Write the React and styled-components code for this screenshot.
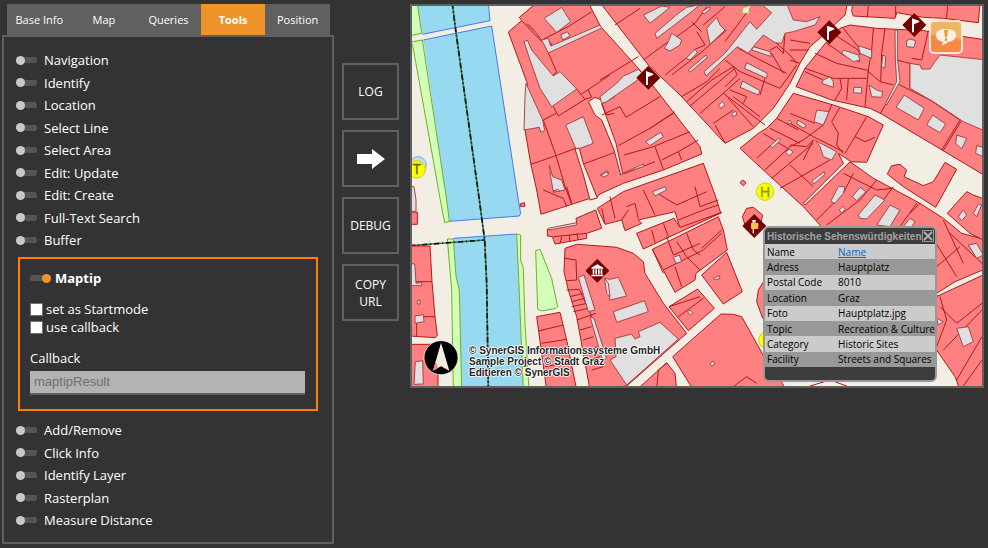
import { useState } from 'react';
import styled, { createGlobalStyle, ThemeProvider } from 'styled-components';

const theme = {
  colors: {
    bg: '#333333',
    line: '#606060',
    text: '#ffffff',
    accent: '#ee922a',
    highlight: '#ff8000',
    track: '#555555',
    knob: '#c9c9c9',
    field: '#b3b3b3',
  },
  fonts: {
    ui: '"Open Sans", "Noto Sans", sans-serif',
    plain: '"Liberation Sans", Arial, sans-serif',
  },
};

const GlobalStyle = createGlobalStyle`
  * {
    box-sizing: border-box;
  }

  body {
    margin: 0;
    background: ${theme.colors.bg};
    color: ${theme.colors.text};
    font-family: ${theme.fonts.ui};
    font-size: 13px;
  }
`;

const Page = styled.main`
  display: flex;
  align-items: flex-start;
  padding: 4px 4px 4px 2px;
`;

const Sidebar = styled.section`
  flex: 0 0 332px;
`;

const Tabs = styled.nav`
  display: flex;
  margin: 0 4px 0 5px;
  background: ${(props) => props.theme.colors.line};
`;

const Tab = styled.button`
  flex: 1 1 0;
  height: 31px;
  padding: 0;
  border: 0;
  background: ${(props) => (props.$active ? props.theme.colors.accent : 'transparent')};
  color: ${(props) => props.theme.colors.text};
  font-family: inherit;
  font-size: 11px;
  font-weight: ${(props) => (props.$active ? 700 : 400)};
  cursor: pointer;
`;

const Panel = styled.div`
  padding: 12px 14px 11px 12px;
  border: 2px solid ${(props) => props.theme.colors.line};
`;

const ToolList = styled.ul`
  display: flex;
  flex-direction: column;
  justify-content: space-between;
  height: ${(props) => props.$height}px;
  margin: 0;
  padding: 0;
  list-style: none;
`;

const ToolLabel = styled.label`
  display: flex;
  align-items: center;
  gap: ${(props) => (props.$strong ? 4 : 7)}px;
  height: 22px;
  font-weight: ${(props) => (props.$strong ? 700 : 400)};
  cursor: pointer;
`;

const Toggle = styled.input`
  appearance: none;
  display: flex;
  align-items: center;
  justify-content: flex-start;
  width: 21px;
  height: 9px;
  margin: 0;
  border-radius: 5px;
  background: linear-gradient(${(props) => props.theme.colors.track} 0 0) center / 100% 6px no-repeat;
  cursor: pointer;

  &::before {
    content: '';
    width: 9px;
    height: 9px;
    border-radius: 50%;
    background: ${(props) => props.theme.colors.knob};
  }

  &:checked {
    justify-content: flex-end;
  }

  &:checked::before {
    background: ${(props) => props.theme.colors.accent};
  }
`;

const ToolCard = styled.div`
  margin: 6px 0 8px 2px;
  padding: 8px 11px 14px 10px;
  border: 2px solid ${(props) => props.theme.colors.highlight};
`;

const Options = styled.div`
  margin: 11px 0 12px;
`;

const CheckLabel = styled.label`
  display: flex;
  align-items: center;
  gap: 3px;
  height: 18px;
`;

const Checkbox = styled.input`
  appearance: none;
  width: 13px;
  height: 13px;
  margin: 0;
  border: 1px solid #707070;
  background: #ffffff;

  &:checked {
    box-shadow: inset 0 0 0 2px #ffffff;
    background: ${(props) => props.theme.colors.accent};
  }
`;

const FieldLabel = styled.label`
  display: block;
  height: 23px;
  line-height: 20px;
`;

const TextField = styled.input`
  display: block;
  width: 100%;
  height: 24px;
  padding: 0 4px 2px;
  border: 0;
  border-bottom: 2px solid ${(props) => props.theme.colors.line};
  background: ${(props) => props.theme.colors.field};
  color: #6f6f6f;
  font-family: ${(props) => props.theme.fonts.plain};
  font-size: 13px;
`;

const Actions = styled.div`
  display: flex;
  flex: 0 0 57px;
  flex-direction: column;
  gap: 10px;
  margin: 59px 11px 0 8px;
`;

const ActionButton = styled.button`
  display: flex;
  align-items: center;
  justify-content: center;
  height: 57px;
  padding: 0;
  border: 2px solid ${(props) => props.theme.colors.line};
  background: transparent;
  color: ${(props) => props.theme.colors.text};
  font-family: inherit;
  font-size: 12px;
  line-height: 17px;
  cursor: pointer;
`;

const MapFrame = styled.section`
  position: relative;
  flex: 1 1 0;
  min-width: 0;
  border: 2px solid ${(props) => props.theme.colors.line};
`;

const MapCanvas = styled.svg`
  display: block;
  width: 100%;
  height: auto;
  background: #f2eee3;
`;

const AlertButton = styled.button`
  position: absolute;
  top: 14px;
  right: 19px;
  display: flex;
  align-items: center;
  justify-content: center;
  width: 34px;
  height: 34px;
  padding: 0;
  border: 2px solid #fde6d2;
  border-radius: 5px;
  background: linear-gradient(190deg, #f0b469 0 45%, #f58a45 55% 100%);
  cursor: pointer;
`;

const Copyright = styled.p`
  position: absolute;
  bottom: 8px;
  left: 57px;
  margin: 0;
  color: #222222;
  font-family: ${(props) => props.theme.fonts.plain};
  font-size: 10px;
  font-weight: 700;
  line-height: 11px;
  text-shadow: 1px 0 #ffffff, -1px 0 #ffffff, 0 1px #ffffff, 0 -1px #ffffff;
`;

const Popup = styled.div`
  position: absolute;
  right: 45px;
  bottom: 4px;
  width: 174px;
  overflow: hidden;
  border: 2px solid #989898;
  border-radius: 6px;
  background: #3c3c3c;
  color: #000000;
`;

const PopupHeader = styled.header`
  display: flex;
  align-items: center;
  justify-content: space-between;
  height: 16px;
  padding: 0 2px 0 2px;
`;

const PopupTitle = styled.h2`
  margin: 0;
  color: #a3a3a3;
  font-family: ${(props) => props.theme.fonts.plain};
  font-size: 10px;
  white-space: nowrap;
`;

const CloseButton = styled.button`
  width: 12px;
  height: 12px;
  padding: 0;
  border: 1px solid #989898;
  background: transparent;
  line-height: 0;
  cursor: pointer;
`;

const PopupTable = styled.table`
  width: 100%;
  height: 123px;
  margin-bottom: 13px;
  border-collapse: collapse;
  font-size: 10px;
  line-height: 12px;
`;

const PopupRow = styled.tr`
  background: #989898;

  &:nth-child(odd) {
    background: #cbcbcb;
  }
`;

const PopupKey = styled.th`
  width: 75px;
  padding: 0 0 0 2px;
  font-weight: 400;
  text-align: left;
`;

const PopupValue = styled.td`
  padding: 0;
  white-space: nowrap;
`;

const PopupLink = styled.a`
  color: #0066cc;
`;

const tabs = ['Base Info', 'Map', 'Queries', 'Tools', 'Position'];

const toolsBefore = [
  'Navigation',
  'Identify',
  'Location',
  'Select Line',
  'Select Area',
  'Edit: Update',
  'Edit: Create',
  'Full-Text Search',
  'Buffer',
];

const toolsAfter = ['Add/Remove', 'Click Info', 'Identify Layer', 'Rasterplan', 'Measure Distance'];

const details = [
  ['Adress', 'Hauptplatz'],
  ['Postal Code', '8010'],
  ['Location', 'Graz'],
  ['Foto', 'Hauptplatz.jpg'],
  ['Topic', 'Recreation & Culture'],
  ['Category', 'Historic Sites'],
  ['Facility', 'Streets and Squares'],
];

// Map geometry, three units per screen pixel.
const water = [
  '22,10 234,10 240,62 37,103',
  '40,120 245,78 325,600 332,640 328,648 118,664 105,570',
  '130,715 320,702 335,805 347,1170 155,1170',
];

const waterEdges = ['235,10 240,62 37,103', '40,120 245,78 325,600 332,640 328,648 118,664', '130,715 320,702'];

const parks = [
  '0,10 22,10 35,100 0,107',
  '0,127 37,120 110,600 118,664 104,668 90,595 50,370 8,135',
  '112,717 130,717 138,830 148,870 155,1170 130,1170 125,870',
  '320,702 332,705 332,780 340,805 345,970 357,1170 340,1170 325,810',
  '377,752 390,748 425,835 443,920 438,925 395,933 383,928',
];

const blocks = [
  '295,96 335,62 328,52 378,10 536,10 572,80 685,205 735,265 870,440 875,462 760,510 640,550 570,582 558,593 540,595 393,643 380,570 362,490 345,390 352,250',
  '572,10 715,195 810,285 945,430 1030,385 1090,325 1140,250 1170,190 1200,140 1235,110 1305,45 1312,10',
  '990,445 1045,400 1070,385 1100,355 1150,280 1270,315 1375,350 1420,375 1370,487 1320,485 1390,535 1530,610 1600,655 1655,700 1730,720 1730,805 1635,845 1580,880 1300,880 1230,675 1180,620 1060,510',
  '1158,260 1185,205 1250,125 1290,85 1320,75 1400,85 1540,92 1730,120 1730,530 1415,342 1380,325 1265,300',
  '1328,10 1710,10 1705,68 1600,55 1540,52 1460,38 1455,55 1330,48 1325,35',
  '1432,522 1445,497 1470,493 1490,510 1482,530 1540,557 1570,545 1605,487 1640,508 1577,622 1480,560',
  '1612,640 1670,575 1690,585 1730,600 1730,725 1680,700',
  '1500,915 1590,885 1730,820 1730,1170 1650,1170 1635,1130 1580,1050 1500,1000',
  '562,625 640,575 880,490 915,585 932,638 810,685 795,635 685,660 695,670 645,692 635,660 585,673',
  '680,700 792,655 810,682 935,638 700,747',
  '727,748 925,650 940,690 952,750 858,820 855,840 795,877',
  '875,825 950,757 997,875 940,912',
  '777,920 863,867 913,925 835,992',
  '788,1070 933,942 970,943 995,950 1062,1070 1130,1170 850,1170',
  '465,745 500,733 570,738 620,742 670,760 700,785 705,820 760,910 830,1000 650,1158 540,1170 500,950 475,870 462,815',
  '680,1170 770,1088 795,1120 800,1170',
  '380,950 450,937 470,1020 500,1170 410,1170',
  '412,688 500,670 498,655 557,630 575,685 530,700 530,715 435,732 427,710 412,708',
  '0,738 60,738 66,845 75,950 82,1007 75,1013 0,1008',
  '0,1033 84,1033 84,1170 0,1170',
  '0,636 22,636 22,673 0,673',
  '330,612 343,608 345,618 332,620',
  '990,548 998,540 1008,548 1000,557',
  '997,650 1010,625 1030,622 1058,645 1050,680 1005,675',
  '1065,838 1045,870 1040,905 1058,955 1090,955',
];

const streets = [
  '495,447 508,445 520,490 562,594 540,600 520,525',
  '535,305 555,292 575,300 580,325 618,430 638,520 632,525 612,450 575,360 555,345',
  '1285,460 1322,484 1185,615 1180,610 1300,490',
];

const courtyards = [
  '402,55 455,22 482,65 440,97',
  '350,72 362,78 395,120 415,115 422,138 500,105 570,75 575,84 415,159 398,126 378,98',
  '452,105 472,95 480,108 458,120',
  '342,125 352,120 365,150 430,228 450,215 500,267 425,320 390,265 360,180',
  '348,250 398,360 404,392 392,397 388,382 342,390 345,290',
  '467,375 520,350 550,430 510,445 497,445',
  '418,495 428,530 455,540 465,570 430,577 422,530',
  '570,525 590,512 597,518 580,530',
  '570,290 600,275 615,290 577,312',
  '700,45 755,18 780,22 720,70',
  '735,100 805,40 830,22 870,14 845,35 780,85 740,115',
  '875,35 900,20 900,28 882,42',
  '890,85 920,52 930,75 945,90 900,133 895,110',
  '785,100 815,120 810,135 780,153 763,145 775,125',
  '828,175 855,148 862,158 840,180',
  '835,210 888,165 892,172 840,217',
  '882,215 945,160 1020,65 1040,88 1085,38 1050,10 1130,10 1150,60 1190,65 1230,50 1215,75 1150,95 1125,100 1115,130 1095,128 1060,105 1030,140 1015,160 982,140 888,228',
  '1010,188 1072,220 1070,235 1003,205',
  '998,243 1050,272 1045,285 990,262',
  '1030,140 1080,155 1085,170 1025,150',
  '925,315 938,305 945,315 932,325',
  '965,340 978,333 980,345 968,350',
  '570,290 620,250 640,228 685,208 695,218 690,235 590,305 575,310',
  '707,425 752,397 760,410 720,437',
  '638,520 700,492 700,500',
  '575,525 592,515 595,525 578,532',
  '727,575 765,560 770,570 735,588',
  '1500,190 1530,195 1535,207 1560,207 1575,185 1590,165 1730,180 1730,395 1660,365 1570,305 1500,265',
  '1490,122 1500,117 1517,122 1512,142 1490,140',
  '1345,137 1385,150 1385,175 1350,160',
  '1300,150 1345,165 1350,180 1330,185 1295,160',
  '1418,165 1427,170 1425,205 1415,200',
  '1455,90 1463,90 1463,180 1470,245 1430,315 1427,310 1460,245 1456,180',
  '1240,240 1260,230 1270,245 1270,262 1235,250',
  '1332,262 1355,262 1355,280 1330,278',
  '1377,255 1400,270 1418,275 1415,292 1385,290',
  '1483,285 1543,325 1525,360 1458,322',
  '1568,345 1607,372 1590,398 1550,375',
  '1640,405 1670,415 1655,447 1637,430',
  '1700,437 1730,445 1730,475 1697,460',
  '1220,330 1257,335 1240,375 1212,365',
  '1163,360 1188,375 1183,385 1160,372',
  '1217,422 1280,455 1265,480 1240,470 1230,440',
  '1205,543 1243,515 1245,523 1212,552',
  '1262,605 1285,560 1305,560 1300,580 1275,610',
  '1327,590 1350,562 1368,575 1340,602',
  '1345,645 1395,585 1425,600 1370,657 1350,655',
  '1400,675 1440,615 1470,630 1440,680',
  '1288,630 1300,618 1305,628 1295,640',
  '1128,370 1140,360 1145,370',
  '1080,438 1105,415 1112,420 1088,443',
  '1127,457 1137,447 1150,455 1138,468',
  '1645,650 1660,630 1670,645 1655,662',
  '1690,640 1705,612 1715,615 1700,650',
  '1480,680 1500,655 1515,665 1500,690',
  '1675,735 1700,730 1720,765 1700,775',
  '1640,985 1675,980 1690,1025 1660,1040',
  '1580,955 1600,965 1585,975',
  '585,835 600,838 625,832 650,888 600,900',
  '610,935 703,902 715,935 620,967',
  '615,1015 665,1002 675,1017 690,1010 685,995 750,967 805,1017 650,1155 600,1080 618,1070',
  '505,832 522,825 555,930 535,935',
  '540,950 552,955 590,1075 578,1082',
  '583,835 595,850 600,890 590,880',
  '790,772 808,765 815,785 798,790',
  '910,835 928,827 930,835 915,840',
  '900,1090 910,1083 915,1092 905,1098',
  '832,935 840,930 848,940 842,946',
  '415,685 500,668 500,675 418,690',
  '0,790 14,792 18,850 35,848 35,857 0,857',
  '15,948 40,944 42,965 15,970',
  '16,1085 38,1082 40,1152 12,1153',
  '0,560 12,560 18,600 18,634 0,634',
  '22,902 30,900 30,912 22,912',
  '430,573 445,568 450,575',
];

const parcels = [
  '415,159 440,215 430,225',
  '438,340 400,360',
  '430,320 445,348 525,298 500,267',
  '515,282 600,225',
  '525,298 545,292 535,270',
  '438,467 497,445',
  '362,493 438,467',
  '400,360 438,467 465,560 485,613',
  '520,492 585,468 612,458',
  '335,62 395,125',
  '400,118 478,78 545,35',
  '415,120 428,138',
  '575,312 590,345 612,340',
  '615,75 690,25',
  '570,240 685,170',
  '575,345 630,320 648,352 750,290',
  '625,437 720,385 795,335',
  '720,385 790,340',
  '642,465 730,440 840,395',
  '735,440 760,508',
  '755,480 805,455 865,420',
  '805,455 815,480',
  '640,522 735,485',
  '700,180 795,110',
  '785,225 870,160 950,90',
  '765,225 840,165',
  '815,290 890,245 930,205',
  '830,305 905,240 970,200',
  '840,318 975,205',
  '870,340 940,280 990,235',
  '860,95 870,110 885,135 850,150',
  '845,65 875,95',
  '945,125 1020,25',
  '880,75 945,20',
  '800,110 855,70 890,20',
  '910,370 970,330',
  '955,295 1030,380',
  '945,180 990,215 1110,265 1160,195',
  '985,145 1050,180 1130,220',
  '970,200 982,225 945,260',
  '970,290 1050,350',
  '940,280 1065,375',
  '1065,235 1050,285',
  '1000,310 1010,290 960,270',
  '915,375 945,428',
  '1070,105 1140,165 1160,190',
  '1030,140 1060,150 1085,160 1120,220',
  '1125,100 1120,160 1100,140 1080,150',
  '1060,80 1068,68 1080,80 1068,92 1060,80',
  '1140,150 1195,150',
  '1140,120 1200,130',
  '1140,180 1170,190',
  '1250,130 1280,150 1300,165 1350,185',
  '1275,105 1345,150 1350,165',
  '1300,85 1360,160',
  '1215,160 1280,190 1370,210 1410,245 1450,255',
  '1185,205 1270,235 1370,235',
  '1185,215 1240,240',
  '1390,85 1385,150 1375,210 1365,320',
  '1425,85 1415,160 1412,245',
  '1460,180 1500,190 1500,265',
  '1555,92 1535,180 1505,175',
  '1315,235 1310,300',
  '1290,235 1295,265 1275,300',
  '1460,250 1560,300 1650,360',
  '1410,342 1435,300',
  '1650,360 1595,450',
  '1654,362 1599,453',
  '1375,18 1372,52',
  '1457,10 1457,50',
  '1613,10 1610,55',
  '1265,315 1240,375 1180,420',
  '1290,322 1265,365 1285,400 1280,435 1300,460',
  '1370,350 1335,410 1305,460',
  '1335,410 1365,425 1395,412',
  '1140,340 1215,370',
  '1140,370 1210,410 1300,455',
  '1140,435 1190,440 1210,420 1180,480',
  '1080,385 1170,430',
  '1100,355 1165,390',
  '1040,475 1100,420',
  '1065,510 1140,440 1180,420',
  '1060,400 1140,450',
  '1085,535 1210,430',
  '1110,565 1260,480',
  '1140,495 1210,560',
  '1220,660 1300,580 1330,520',
  '1250,675 1350,600 1400,540',
  '1300,520 1400,570 1450,565',
  '1420,600 1450,560',
  '1500,640 1530,610',
  '1470,680 1520,610',
  '575,625 585,670',
  '600,590 615,655',
  '655,630 635,660',
  '650,620 675,610 685,655',
  '700,570 735,645',
  '735,575 800,615 890,575',
  '855,560 870,620 925,600',
  '805,660 880,630 925,615',
  '725,690 735,728',
  '760,670 775,710',
  '770,710 790,765 870,730',
  '800,725 830,770 870,810',
  '760,810 800,790 840,770 880,750 935,700',
  '875,745 935,690',
  '830,700 850,750 870,765',
  '795,800 815,860',
  '727,748 760,820',
  '777,920 870,890',
  '805,950 880,895',
  '465,775 498,780 500,840 470,842',
  '470,870 508,868 545,950',
  '480,890 520,880',
  '485,905 525,895',
  '485,920 530,910',
  '490,935 535,925',
  '500,960 558,940',
  '510,990 545,980',
  '520,1020 550,1010',
  '530,1050 565,1040',
  '535,1080 570,1070',
  '545,1110 580,1100',
  '385,993 460,975',
  '395,1030 470,1018',
  '400,1060 480,1050',
  '405,1100 490,1085',
  '450,730 455,710',
  '480,725 478,705',
  '505,720 500,700',
  '430,710 530,700',
  '0,845 66,845',
  '15,950 75,950',
  '20,1010 20,970',
  '740,1170 745,1110 770,1090',
  '970,1160 1010,1130 1040,1150',
  '1200,1158 1260,1140 1310,1158',
  '400,570 460,595 470,620',
  '470,560 485,610',
  '1580,800 1650,740',
  '1600,660 1660,790',
  '1560,700 1640,830',
  '1620,700 1716,790',
  '1590,920 1640,970 1716,910',
  '1590,890 1610,960 1580,1040',
  '1600,1050 1716,930',
  '1640,1140 1716,1010',
  '1660,1158 1716,1080',
];

const flagMarkers = [
  [715, 233],
  [1258, 97],
  [1513, 75],
];

const stops = [
  [20, 508, 'T'],
  [1065, 575, 'H'],
  [1072, 1020, 'H'],
];

const Tool = ({ name }) => (
  <li>
    <ToolLabel>
      <Toggle type="checkbox" />
      {name}
    </ToolLabel>
  </li>
);

const Diamond = ({ x, y, children }) => (
  <g transform={`translate(${x} ${y})`}>
    <path d="M0-36 36 0 0 36-36 0Z" fill="#730000" />
    {children}
  </g>
);

const CityMap = () => (
  <MapCanvas viewBox="6 18 1710 1140" role="img" aria-label="City map of Graz">
    <g fill="#96d9f1">
      {water.map((points) => (
        <polygon key={points} points={points} />
      ))}
    </g>
    <g fill="none" stroke="#4a78ee" strokeWidth="3">
      {waterEdges.map((points) => (
        <polyline key={points} points={points} />
      ))}
    </g>
    <g fill="#d1ffb9" stroke="#76ae1c" strokeWidth="3">
      {parks.map((points) => (
        <polygon key={points} points={points} />
      ))}
    </g>
    <g fill="none" stroke="#3f7d4c" strokeWidth="5">
      <path d="M127 10 137 90 208 600 224 720 230 850 235 1170M0 737 224 720" />
      <path d="M127 10 137 90 208 600 224 720 230 850 235 1170M0 737 224 720" stroke="#101510" strokeDasharray="16 8 4 8" />
    </g>
    <g fill="#ff8080" stroke="#b4181c" strokeWidth="3" strokeLinejoin="round">
      {blocks.map((points) => (
        <polygon key={points} points={points} />
      ))}
    </g>
    <g fill="#f2eee3" stroke="#b4181c" strokeWidth="3">
      {streets.map((points) => (
        <polygon key={points} points={points} />
      ))}
    </g>
    <g fill="none" stroke="#b4181c" strokeWidth="3">
      {parcels.map((points) => (
        <polyline key={points} points={points} />
      ))}
    </g>
    <g fill="#e0e0e0" stroke="#a8454a" strokeWidth="3">
      {courtyards.map((points) => (
        <polygon key={points} points={points} />
      ))}
    </g>
    <polygon points="1000,25 1020,18 1015,40 998,38" fill="#d1ffb9" />

    <circle cx="24" cy="495" r="25" fill="#c4def5" stroke="#82a9d8" strokeWidth="3" />
    {stops.map(([x, y, letter]) => (
      <g key={`${x}-${y}`}>
        <circle cx={x} cy={y} r="26" fill="#ffff00" stroke="#d2d200" strokeWidth="3" />
        <text
          x={x}
          y={y + 15}
          fill={letter === 'T' ? '#6b6200' : '#7d9a00'}
          stroke={letter === 'T' ? '#6b6200' : '#7d9a00'}
          fontFamily="Liberation Sans, sans-serif"
          fontSize="42"
          textAnchor="middle"
        >
          {letter}
        </text>
      </g>
    ))}

    {flagMarkers.map(([x, y]) => (
      <Diamond key={x} x={x} y={y}>
        <path d="M-7-20 15-12 15-9-1-2V22h-6Z" fill="#ffffff" />
      </Diamond>
    ))}
    <Diamond x={562} y={812}>
      <path d="M-18-9 0-19 18-9v3h-36ZM-14-4h5v15h-5ZM-6-4h5v15h-5ZM2-4h5v15H2ZM10-4h5v15h-5ZM-18 12h36v5h-36Z" fill="#ffffff" />
    </Diamond>
    <Diamond x={1033} y={678}>
      <path d="M-5-18h4v40h-4Z" fill="#ffffff" />
      <rect x="-10" y="-10" width="22" height="19" rx="4" fill="#f7c255" />
      <path d="M-5-18h9v7h-9Z" fill="#ffffff" />
    </Diamond>

    <circle cx="93" cy="1073" r="51" fill="#000000" stroke="#ffffff" strokeWidth="2" />
    <path d="M93 1028 118 1112 93 1099 69 1112Z" fill="#f2eee3" />
    <path d="M69 1112 77 1083 84 1104Z" fill="#ff8080" />
  </MapCanvas>
);

const PlacePopup = ({ onClose }) => (
  <Popup>
    <PopupHeader>
      <PopupTitle>Historische Sehenswürdigkeiten</PopupTitle>
      <CloseButton type="button" aria-label="Close" onClick={onClose}>
        <svg width="10" height="10" viewBox="0 0 10 10" aria-hidden="true">
          <path d="M1 1 9 9M9 1 1 9" stroke="#b0b0b0" strokeWidth="2" />
        </svg>
      </CloseButton>
    </PopupHeader>
    <PopupTable>
      <tbody>
        <PopupRow>
          <PopupKey scope="row">Name</PopupKey>
          <PopupValue>
            <PopupLink href="#name">Name</PopupLink>
          </PopupValue>
        </PopupRow>
        {details.map(([key, value]) => (
          <PopupRow key={key}>
            <PopupKey scope="row">{key}</PopupKey>
            <PopupValue>{value}</PopupValue>
          </PopupRow>
        ))}
      </tbody>
    </PopupTable>
  </Popup>
);

const App = () => {
  const [activeTab, setActiveTab] = useState('Tools');
  const [popupOpen, setPopupOpen] = useState(true);

  return (
    <ThemeProvider theme={theme}>
      <GlobalStyle />
      <Page>
        <Sidebar>
          <Tabs>
            {tabs.map((name) => (
              <Tab key={name} type="button" $active={name === activeTab} onClick={() => setActiveTab(name)}>
                {name}
              </Tab>
            ))}
          </Tabs>
          <Panel>
            <ToolList $height={202}>
              {toolsBefore.map((name) => (
                <Tool key={name} name={name} />
              ))}
            </ToolList>
            <ToolCard>
              <ToolLabel $strong>
                <Toggle type="checkbox" defaultChecked />
                Maptip
              </ToolLabel>
              <Options>
                <CheckLabel>
                  <Checkbox type="checkbox" />
                  set as Startmode
                </CheckLabel>
                <CheckLabel>
                  <Checkbox type="checkbox" />
                  use callback
                </CheckLabel>
              </Options>
              <FieldLabel htmlFor="callback">Callback</FieldLabel>
              <TextField id="callback" type="text" defaultValue="maptipResult" />
            </ToolCard>
            <ToolList $height={112}>
              {toolsAfter.map((name) => (
                <Tool key={name} name={name} />
              ))}
            </ToolList>
          </Panel>
        </Sidebar>

        <Actions>
          <ActionButton type="button">LOG</ActionButton>
          <ActionButton type="button" aria-label="Run">
            <svg width="28" height="20" viewBox="0 0 28 20" aria-hidden="true">
              <path d="M0 5h15V0l13 10-13 10v-5H0Z" fill="#ffffff" />
            </svg>
          </ActionButton>
          <ActionButton type="button">DEBUG</ActionButton>
          <ActionButton type="button">
            COPY
            <br />
            URL
          </ActionButton>
        </Actions>

        <MapFrame>
          <CityMap />
          <AlertButton type="button" aria-label="Report a problem">
            <svg width="22" height="20" viewBox="0 0 22 20" aria-hidden="true">
              <path d="M11 2c6 0 10 2 10 6s-4 7-8 7l-6 4 1-4c-4-1-7-3-7-7s4-6 10-6Z" fill="#fdeee6" />
              <path d="M9 3h4l-1 7h-2ZM10 11h2v3h-2Z" fill="#f0962a" />
            </svg>
          </AlertButton>
          <Copyright>
            © SynerGIS Informationssysteme GmbH
            <br />
            Sample Project © Stadt Graz
            <br />
            Editieren © SynerGIS
          </Copyright>
          {popupOpen && <PlacePopup onClose={() => setPopupOpen(false)} />}
        </MapFrame>
      </Page>
    </ThemeProvider>
  );
};

export default App;
